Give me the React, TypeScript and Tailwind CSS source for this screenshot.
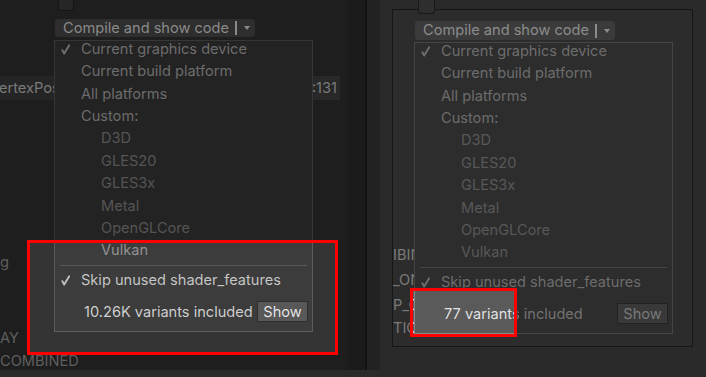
type Pal = {
  bg: string;
  border: string;
  text: string;
  sub: string;
  sep: string;
  check: string;
  skip: string;
  count: string;
  btn: string;
};

const LEFT: Pal = {
  bg: "bg-[#232323]",
  border: "border-[#363636]",
  text: "text-[#6c6c6c]",
  sub: "text-[#555555]",
  sep: "bg-[#333333]",
  check: "#707070",
  skip: "text-[#737373]",
  count: "text-[#797979]",
  btn: "bg-[#333333] border-[#1b1b1b] text-[#878787]",
};

const RIGHT: Pal = {
  bg: "bg-[#2d2d2d]",
  border: "border-[#454545]",
  text: "text-[#6c6c6c]",
  sub: "text-[#585858]",
  sep: "bg-[#444444]",
  check: "#6e6e6e",
  skip: "text-[#6c6c6c]",
  count: "text-[#727272]",
  btn: "bg-[#393939] border-[#222222] text-[#7a7a7a]",
};

function Check({ color }: { color: string }) {
  return (
    <svg width="9" height="11" viewBox="0 0 9 11">
      <path d="M1.4 6.2 L3.2 9.6 L8.2 1.2" stroke={color} strokeWidth="1.9" fill="none" strokeLinecap="round" strokeLinejoin="round" />
    </svg>
  );
}

function Popup({ p, count }: { p: Pal; count: string }) {
  const top = ["Current graphics device", "Current build platform", "All platforms", "Custom:"];
  const sub = ["D3D", "GLES20", "GLES3x", "Metal", "OpenGLCore", "Vulkan"];
  return (
    <div className={`flex flex-col w-[259px] h-[292px] border whitespace-nowrap ${p.border} ${p.bg}`}>
      <div className="-mt-[3px] flex flex-col">
        {top.map((t, i) => (
          <div key={t} className={`h-[22.4px] flex items-center pl-[6px] ${p.text}`}>
            <span className="w-[20px] flex">{i === 0 && <Check color={p.check} />}</span>
            {t}
          </div>
        ))}
        {sub.map((t) => (
          <div key={t} className={`h-[22.4px] flex items-center pl-[46px] ${p.sub}`}>
            {t}
          </div>
        ))}
      </div>
      <div className={`mt-[3px] mx-[5px] h-px ${p.sep}`} />
      <div className={`mt-[3px] h-[22.4px] flex items-center pl-[6px] ${p.skip}`}>
        <span className="w-[20px] flex">
          <Check color={p.check} />
        </span>
        Skip unused shader_features
      </div>
      <div className="mt-[10px] h-[21px] flex items-center justify-between pl-[29px] pr-[4px]">
        <span className={p.count}>{count}</span>
        <span className={`h-[21px] w-[51px] border flex items-center justify-center ${p.btn}`}>Show</span>
      </div>
    </div>
  );
}

function DropButton({ cls }: { cls: string }) {
  return (
    <div className={`w-[200px] rounded-[3px] flex items-center pl-[8px] whitespace-nowrap ${cls}`}>
      <span>Compile and show code</span>
      <span className="ml-[6px] w-[2px] h-[14px] bg-current" />
      <svg className="ml-[7px]" width="6" height="4" viewBox="0 0 6 4">
        <path d="M0 0 H6 L3 4 Z" fill="currentColor" />
      </svg>
    </div>
  );
}

export default function App() {
  return (
    <div className="w-[706px] h-[377px] bg-[#2a2a2a] flex overflow-hidden text-[14.6px] leading-none font-['Inter',sans-serif]">
      {/* left capture */}
      <div className="h-[370px] flex shrink-0">
        <div className="relative w-[348px] h-full bg-[#1e1e1e] overflow-hidden">
          <div className="flex flex-col">
            <div className="ml-[58px] w-[16px] h-[11px] rounded-b-[3px] bg-[#262626] border border-t-0 border-[#151515]" />
            <div className="mt-[8px] ml-[55px]">
              <DropButton cls="h-[18px] bg-[#2e2e2e] text-[#8a8a8a]" />
            </div>
            <div className="mt-[39px] w-[340px] h-[24px] bg-[#252525] flex items-center justify-between text-[#7a7a7a]">
              <span className="-ml-[1px]">ertexPosition</span>
              <span className="h-full px-[3px] flex items-center bg-[#282828]">:131</span>
            </div>
            <div className="text-[#5e5e5e] flex flex-col">
              <span className="mt-[152px] h-[20px] flex items-center">g</span>
              <span className="mt-[56px] h-[20px] flex items-center">AY</span>
              <span className="mt-[3px] h-[20px] flex items-center">COMBINED</span>
            </div>
          </div>
          <div className="absolute left-[54px] top-[40px]">
            <Popup p={LEFT} count="10.26K variants included" />
          </div>
          <div className="absolute left-[27px] top-[240px] w-[311px] h-[115px] border-[3px] border-[#ff0000] backdrop-brightness-[1.72]" />
        </div>
        <div className="w-[17px] h-full bg-[#1b1b1b]" />
        <div className="w-[2px] h-full bg-[#111111]" />
        <div className="w-[13px] h-full bg-[#222222]" />
      </div>

      {/* right capture */}
      <div className="relative flex-1 h-full">
        <div className="mt-[9px] ml-[12px] w-[301px] h-[338px] border border-[#161616] bg-[#2c2c2c] relative">
          <div className="flex flex-col">
            <div className="relative z-10 -mt-[10px] ml-[25px] w-[17px] h-[14px] rounded-b-[3px] bg-[#2e2e2e] border border-t-0 border-[#1a1a1a]" />
            <div className="mt-[7px] ml-[22px]">
              <DropButton cls="h-[19px] bg-[#3b3b3b] text-[#8c8c8c]" />
            </div>
            <div className="text-[#7a7a7a] flex flex-col">
              <span className="mt-[205px] h-[20px] flex items-center">IBIN</span>
              <span className="mt-[5px] h-[20px] flex items-center">_ON</span>
              <span className="mt-[5px] h-[20px] flex items-center">P_C</span>
              <span className="mt-[3px] h-[20px] flex items-center">TIC</span>
            </div>
          </div>
          <div className="absolute left-[21px] top-[32px]">
            <Popup p={RIGHT} count="77 variants included" />
          </div>
        </div>
        <div className="absolute left-[30px] top-[288px] w-[107px] h-[49px] border-[3px] border-[#ff0000] backdrop-brightness-200" />
      </div>
    </div>
  );
}
